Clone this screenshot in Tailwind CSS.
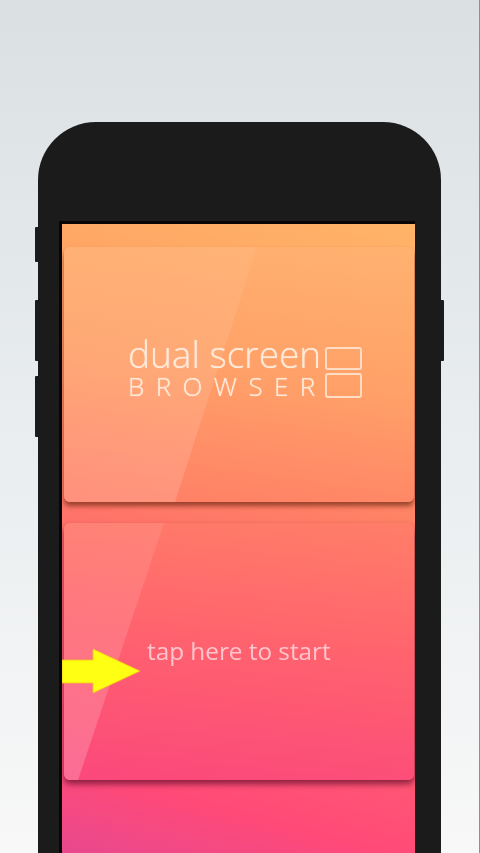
<!DOCTYPE html>
<html lang="en">
<head>
    <meta charset="UTF-8">
    <title>Dual Screen Browser</title>
    <script src="https://cdn.jsdelivr.net/npm/@tailwindcss/browser@4"></script>
</head>
<body class="w-[480px] h-[853px] overflow-hidden bg-gradient-to-b from-[#dbe0e3] via-[#e9edef] to-[#f8f8f8] border-r border-[#8f8f8f]">
    <div class="pt-[122px] pl-[35px] flex items-start">
        <!-- left side buttons -->
        <div class="w-[3px] pt-[105px] flex flex-col">
            <div class="h-[35px] bg-[#1b1b1b] rounded-l-[1px]"></div>
            <div class="h-[61px] mt-[38px] bg-[#1b1b1b] rounded-l-[1px]"></div>
            <div class="h-[61px] mt-[15px] bg-[#1b1b1b] rounded-l-[1px]"></div>
        </div>

        <!-- phone body -->
        <div class="w-[403px] h-[731px] bg-[#1b1b1b] rounded-t-[58px] pt-[99px] pl-[21px]">
            <div class="w-[356px] h-[632px] bg-[#0a0505] pt-[3px] pl-[3px]">
                <div class="relative w-[353px] h-[629px] overflow-hidden bg-[linear-gradient(195deg,#ffb468_0%,#ffa264_20%,#ff7d66_45%,#ff5c72_72%,#ff4a78_88%,#e8488e_100%)]">

                    <!-- cards -->
                    <div class="relative ml-[2px] mt-[23px] w-[350px] h-[255px] rounded-md bg-[linear-gradient(188deg,#ffb270_0%,#ffa068_50%,#ff7d66_100%)] shadow-[0_4px_5px_rgba(120,45,25,0.75)]">
                        <div class="absolute inset-0 rounded-md bg-gradient-to-b from-white/5 to-white/15 [clip-path:polygon(0_0,193px_0,111px_255px,0_255px)]"></div>
                        <div class="absolute left-[64px] top-[92px] flex gap-[7px] text-[#ffe9d8] [text-shadow:0_0_1px_#ffe9d8] blur-[0.4px]">
                            <div class="w-[190px]">
                                <div class="text-[37px] leading-[30px] font-['Open_Sans',sans-serif] font-light whitespace-nowrap">dual screen</div>
                                <div class="text-[26px] leading-[34px] font-['Open_Sans',sans-serif] font-light tracking-[11.4px] whitespace-nowrap">BROWSER</div>
                            </div>
                            <div class="mt-[8px] flex flex-col gap-[3px]">
                                <div class="w-[37px] h-[23px] border-2 border-[#ffdcc4] rounded-[3px]"></div>
                                <div class="w-[37px] h-[25px] border-2 border-[#ffdcc4] rounded-[3px]"></div>
                            </div>
                        </div>
                    </div>

                    <div class="relative ml-[2px] mt-[21px] w-[350px] h-[257px] rounded-md bg-[linear-gradient(186deg,#ff7e68_0%,#ff626e_48%,#fb487c_100%)] shadow-[0_4px_6px_rgba(100,15,45,0.75)]">
                        <div class="absolute inset-0 rounded-md bg-gradient-to-b from-white/8 to-white/20 [clip-path:polygon(0_0,100px_0,14px_257px,0_257px)]"></div>
                        <div class="absolute left-[83px] top-[110px] text-[24.3px] leading-[36px] font-['Open_Sans',sans-serif] text-[#ffc4cc] blur-[0.3px] whitespace-nowrap">tap here to start</div>
                    </div>

                    <!-- arrow lies over the card -->
                    <svg class="absolute left-0 top-[425px]" width="80" height="46" viewBox="0 0 80 46">
                        <path d="M0 11H31V0L78 22L31 44V34H0Z" fill="#ffff14" stroke="#f4c020" stroke-width="0.8"/>
                    </svg>
                </div>
            </div>
        </div>

        <!-- right side button -->
        <div class="w-[3px] mt-[178px] h-[61px] bg-[#1b1b1b] rounded-r-[1px]"></div>
    </div>
</body>
</html>
